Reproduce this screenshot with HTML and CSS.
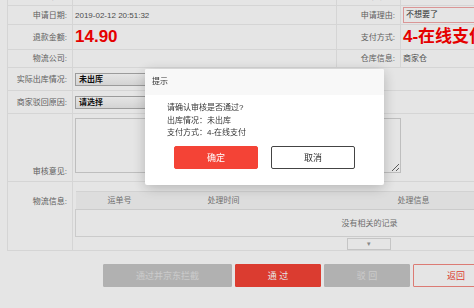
FILE: index.html
```html
<!DOCTYPE html>
<html lang="zh-CN">

<head>
	<meta charset="utf-8">
	<title>售后审核</title>
	<link rel="stylesheet" href="styles.css">
</head>

<body>
	<div class="page">
		<table class="info">
			<colgroup>
				<col class="c-label">
				<col class="c-value">
				<col class="c-label2">
				<col class="c-value2">
			</colgroup>
			<tr class="r0">
				<td class="label">售后单号:</td>
				<td>201902125131</td>
				<td class="label">订单编号:</td>
				<td>8801923</td>
			</tr>
			<tr class="r1">
				<td class="label">申请日期:</td>
				<td class="text">2019-02-12 20:51:32</td>
				<td class="label">申请理由:</td>
				<td><div class="reason">不想要了</div></td>
			</tr>
			<tr class="r2">
				<td class="label">退款金额:</td>
				<td><span class="money">14.90</span></td>
				<td class="label">支付方式:</td>
				<td><span class="money">4-在线支付</span></td>
			</tr>
			<tr class="r3">
				<td class="label">物流公司:</td>
				<td></td>
				<td class="label">仓库信息:</td>
				<td class="text">商家仓</td>
			</tr>
			<tr class="r4">
				<td class="label">实际出库情况:</td>
				<td colspan="3"><div class="select">未出库</div></td>
			</tr>
			<tr class="r5">
				<td class="label">商家驳回原因:</td>
				<td colspan="3"><div class="select">请选择</div></td>
			</tr>
			<tr class="r6">
				<td class="label bottom">审核意见:</td>
				<td colspan="3" class="top"><textarea class="remark"></textarea></td>
			</tr>
			<tr class="r7">
				<td class="label top lead">物流信息:</td>
				<td colspan="3" class="top">
					<table class="logistics">
						<colgroup>
							<col class="l1">
							<col class="l2">
							<col class="l3">
							<col class="l4">
						</colgroup>
						<tr class="head">
							<th>运单号</th>
							<th>处理时间</th>
							<th>处理信息</th>
							<th>操作人</th>
						</tr>
						<tr class="empty">
							<td colspan="4">没有相关的记录</td>
						</tr>
					</table>
					<div class="toggle"><span>▾</span></div>
				</td>
			</tr>
		</table>

		<div class="actions">
			<button class="btn btn-gray btn-wide">通过并京东拦截</button>
			<button class="btn btn-red">通 过</button>
			<button class="btn btn-gray">驳 回</button>
			<button class="btn btn-line">返回</button>
		</div>
	</div>

	<!-- confirm dialog -->
	<div class="mask"></div>
	<div class="dialog">
		<div class="dialog-head">提示</div>
		<div class="dialog-body">
			<p>请确认审核是否通过?</p>
			<p>出库情况：未出库</p>
			<p>支付方式：4-在线支付</p>
		</div>
		<div class="dialog-btns">
			<button class="dbtn dbtn-ok">确定</button>
			<button class="dbtn dbtn-cancel">取消</button>
		</div>
	</div>
</body>

</html>
```

FILE: styles.css
```css
/* common css */
* {
	margin: 0;
	padding: 0;
	box-sizing: border-box;
}

body {
	font-family: "Liberation Sans", "Noto Sans CJK SC", sans-serif;
	font-size: 8px;
	color: #333;
	background-color: #fff;
	width: 474px;
	height: 308px;
	overflow: hidden;
}

/* page */
.page {
	width: 680px;
	margin: -14px 0 0 7px;
}

.info {
	border-collapse: collapse;
	table-layout: fixed;
	width: 662px;
}

.c-label { width: 65px; }
.c-value { width: 264px; }
.c-label2 { width: 64px; }
.c-value2 { width: 269px; }

.info > tbody > tr > td {
	border: 1px solid #eeeeee;
	padding: 0 2px;
	vertical-align: middle;
	line-height: 11px;
}

.info td.label {
	text-align: right;
	color: #6a6a6a;
	padding-right: 5px;
}

.info td.text {
	color: #555;
}

.info td.top { vertical-align: top; }
.info td.bottom { vertical-align: bottom; padding-bottom: 4px; }
.info td.lead { padding-top: 14px; }

.r0 td { height: 19px; }
.r1 td { height: 19px; }
.r2 td { height: 25px; }
.r3 td { height: 18px; }
.r4 td { height: 23px; }
.r5 td { height: 23px; }
.r6 td { height: 68px; }
.r7 td { height: 69px; }

.reason {
	height: 16px;
	line-height: 14px;
	border: 1px solid #f3a7a7;
	padding-left: 2px;
	color: #333;
}

.money {
	font-size: 17px;
	font-weight: bold;
	color: #ff0000;
	line-height: 20px;
	white-space: nowrap;
}

.select {
	width: 190px;
	height: 13px;
	line-height: 11px;
	border: 1px solid #adadad;
	background: linear-gradient(#fff, #ececec);
	padding-left: 3px;
	color: #111;
	font-weight: bold;
}

.remark {
	display: block;
	width: 326px;
	height: 55px;
	margin-top: 4px;
	border: 1px solid #d4d4d4;
	background-color: #fff;
}

/* logistics table */
.logistics {
	border-collapse: collapse;
	table-layout: fixed;
	width: 588px;
	margin-top: 9px;
	color: #7a7a7a;
}

.l1 { width: 88px; }
.l2 { width: 120px; }
.l3 { width: 260px; }
.l4 { width: 120px; }

.logistics th {
	font-weight: normal;
	height: 18px;
	background-color: #f7f7f7;
	border-top: 1px solid #eaeaea;
}

.logistics td {
	height: 27px;
	text-align: center;
	border: 1px solid #e2e2e2;
}

.toggle {
	width: 44px;
	height: 12px;
	margin: 1px 0 0 272px;
	border: 1px solid #dcdcdc;
	background-color: #fff;
	color: #999;
	text-align: center;
	line-height: 10px;
	font-size: 7px;
}

/* bottom buttons */
.actions {
	display: flex;
	gap: 3px;
	padding: 13px 0 0 96px;
}

.btn {
	font-family: inherit;
	font-size: 9px;
	width: 86px;
	height: 23px;
	border: 1px solid transparent;
	border-radius: 1px;
}

.btn-wide { width: 129px; }

.btn-gray {
	background-color: #c6c6c6;
	border-color: #c6c6c6;
	color: #e2e2e2;
}

.btn-red {
	background-color: #f44336;
	border-color: #f44336;
	color: #fff;
}

.btn-line {
	background-color: #fff;
	border-color: #f58a82;
	color: #f44336;
}

/* dialog */
.mask {
	position: fixed;
	left: 0;
	top: 0;
	width: 100%;
	height: 100%;
	background-color: rgba(0, 0, 0, 0.1);
}

.dialog {
	position: fixed;
	left: 145px;
	top: 69px;
	width: 239px;
	height: 116px;
	background-color: #fff;
	border-radius: 2px;
	box-shadow: 0 3px 14px rgba(0, 0, 0, 0.22);
	overflow: hidden;
}

.dialog-head {
	height: 26px;
	line-height: 26px;
	padding-left: 7px;
	background-color: #f8f8f8;
	color: #333;
}

.dialog-body {
	padding: 7px 0 0 22px;
	line-height: 12.5px;
	color: #333;
}

.dialog-btns {
	display: flex;
	justify-content: center;
	gap: 13px;
	margin-top: 6px;
}

.dbtn {
	font-family: inherit;
	font-size: 9px;
	width: 84px;
	height: 23px;
	border-radius: 2px;
}

.dbtn-ok {
	background-color: #f44336;
	border: 1px solid #f44336;
	color: #fff;
}

.dbtn-cancel {
	background-color: #fff;
	border: 1px solid #444;
	color: #333;
}
```
